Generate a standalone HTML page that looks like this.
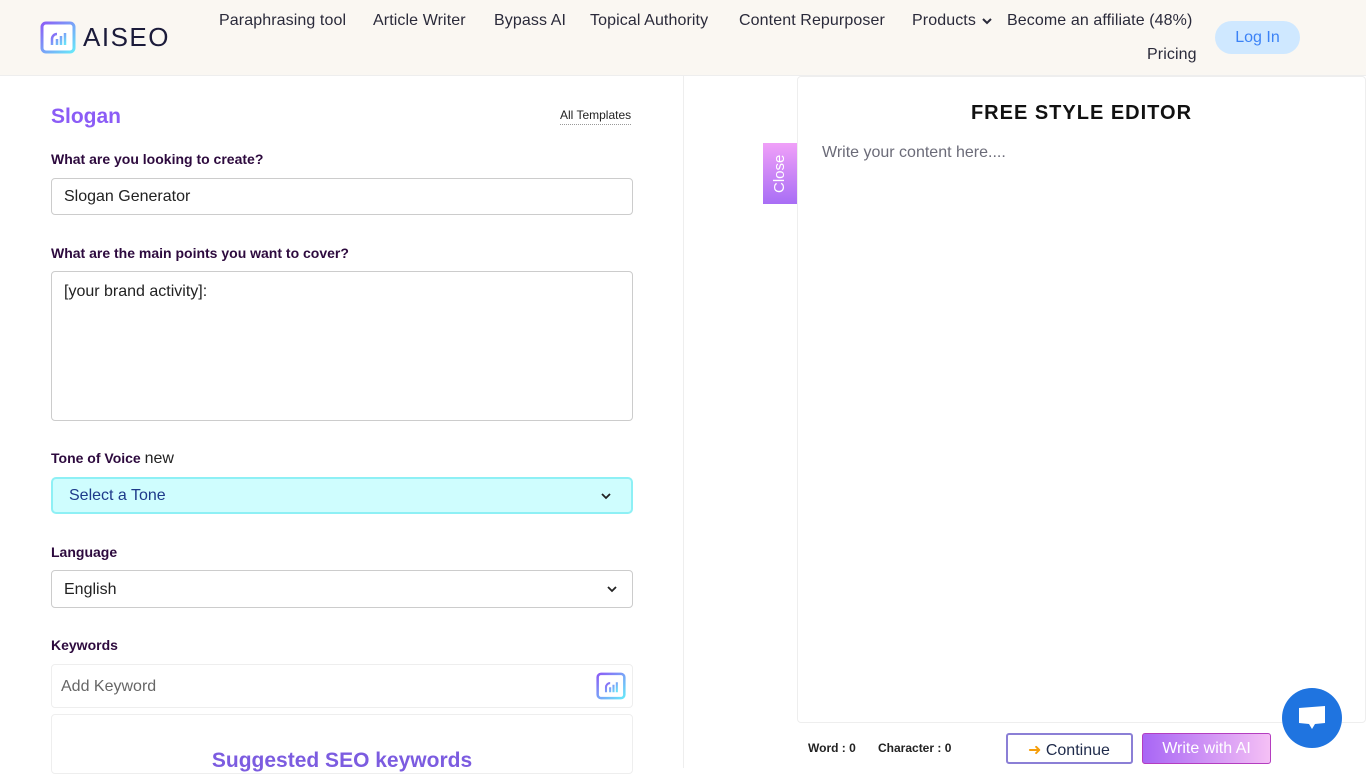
<!DOCTYPE html>
<html><head><meta charset="utf-8"><style>
*{box-sizing:border-box;margin:0;padding:0}
body{width:1366px;height:768px;overflow:hidden;background:#fff;font-family:"Liberation Sans",sans-serif;position:relative;color:#222}
.hdr{position:absolute;left:0;top:0;width:1366px;height:76px;background:#faf7f2;border-bottom:1px solid #eee}
.nav{position:absolute;font-size:16px;color:#2a2a3a;top:12px;letter-spacing:0.1px}
.abs{position:absolute}
.lbl{position:absolute;left:51px;font-size:14px;font-weight:bold;color:#2d0a3e}
.box{position:absolute;left:51px;width:582px;border:1px solid #ccc;border-radius:4px;background:#fff}
.chev{position:absolute}
</style></head><body>
<div class="hdr">
 <svg class="abs" style="left:40px;top:21px" width="36" height="33" viewBox="0 0 36 33"><defs><linearGradient id="g" x1="0" y1="0" x2="1" y2="1"><stop offset="0" stop-color="#8b5cf6"/><stop offset="1" stop-color="#67e8f9"/></linearGradient></defs><rect x="2" y="2" width="32" height="29" rx="4" fill="#fff" stroke="url(#g)" stroke-width="3"/><path d="M12 24v-6a5 5 0 0 1 5-5M17 24v-6M21 24v-9M25 24v-12" stroke="url(#g)" stroke-width="2.5" fill="none"/></svg>
 <div class="abs" style="left:83px;top:22px;font-size:26px;letter-spacing:1.5px;color:#1b1b3a">AISEO</div>
 <div class="nav" style="left:219px">Paraphrasing tool</div>
 <div class="nav" style="left:373px">Article Writer</div>
 <div class="nav" style="left:494px">Bypass AI</div>
 <div class="nav" style="left:590px">Topical Authority</div>
 <div class="nav" style="left:739px">Content Repurposer</div>
 <div class="nav" style="left:912px">Products</div>
 <svg class="chev" style="left:981px;top:16px" width="12" height="10" viewBox="0 0 12 10"><path d="M2 3l4 4 4-4" stroke="#2a2a3a" stroke-width="2" fill="none"/></svg>
 <div class="nav" style="left:1007px">Become an affiliate (48%)</div>
 <div class="nav" style="left:1147px;top:46px">Pricing</div>
 <div class="abs" style="left:1215px;top:21px;width:85px;height:33px;border-radius:17px;background:#cfe8ff;color:#3b82f6;font-size:16px;text-align:center;line-height:33px">Log In</div>
</div>
<div class="abs" style="left:0;top:76px;width:684px;height:692px;border-right:1px solid #eee"></div>
<div class="abs" style="left:51px;top:105px;font-size:21px;font-weight:bold;color:#8b5cf6">Slogan</div>
<div class="abs" style="left:560px;top:108px;font-size:12px;color:#222;border-bottom:1px dotted #999;padding-bottom:2px">All Templates</div>
<div class="lbl" style="top:151px">What are you looking to create?</div>
<div class="box" style="top:178px;height:37px;font-size:16px;padding:9px 12px">Slogan Generator</div>
<div class="lbl" style="top:245px">What are the main points you want to cover?</div>
<div class="box" style="top:271px;height:150px;font-size:16px;padding:11px 12px">[your brand activity]:</div>
<div class="lbl" style="top:450px">Tone of Voice <span style="font-weight:normal;font-size:16px;color:#222">new</span></div>
<div class="box" style="top:477px;height:37px;background:#cffdfe;border:2px solid #8ef0f5;border-radius:5px;font-size:16px;padding:8px 16px;color:#1e3a8a">Select a Tone<svg class="chev" style="right:19px;top:13px" width="12" height="8" viewBox="0 0 12 8"><path d="M2 2l4 4 4-4" stroke="#222" stroke-width="1.8" fill="none"/></svg></div>
<div class="lbl" style="top:544px">Language</div>
<div class="box" style="top:570px;height:38px;font-size:16px;padding:10px 12px">English<svg class="chev" style="right:14px;top:14px" width="12" height="8" viewBox="0 0 12 8"><path d="M2 2l4 4 4-4" stroke="#222" stroke-width="1.8" fill="none"/></svg></div>
<div class="lbl" style="top:637px">Keywords</div>
<div class="box" style="top:664px;height:44px;border-color:#eee;font-size:16px;padding:13px 9px;color:#666">Add Keyword
 <svg class="abs" style="right:6px;top:6px" width="30" height="30" viewBox="0 0 36 33"><rect x="2" y="2" width="32" height="29" rx="4" fill="#fff" stroke="url(#g)" stroke-width="3"/><path d="M12 24v-6a5 5 0 0 1 5-5M17 24v-6M21 24v-9M25 24v-12" stroke="url(#g)" stroke-width="2.5" fill="none"/></svg></div>
<div class="box" style="top:714px;height:60px;border-color:#eee"></div>
<div class="abs" style="left:51px;width:582px;top:749px;text-align:center;font-size:21px;font-weight:bold;color:#7c5ce0">Suggested SEO keywords</div>
<div class="abs" style="left:763px;top:143px;width:34px;height:61px;background:linear-gradient(#f0a0f8,#a86ef5)"></div>
<div class="abs" style="left:763px;top:143px;width:34px;height:61px;color:#fff;font-size:15px;writing-mode:vertical-rl;transform:rotate(180deg);text-align:center;line-height:34px">Close</div>
<div class="abs" style="left:797px;top:76px;width:569px;height:647px;border:1px solid #eee;border-radius:4px"></div>
<div class="abs" style="left:797px;width:569px;top:102px;text-align:center;font-size:20px;font-weight:bold;letter-spacing:1px;color:#111">FREE STYLE EDITOR</div>
<div class="abs" style="left:822px;top:144px;font-size:16px;color:#6b6b78">Write your content here....</div>
<div class="abs" style="left:808px;top:741px;font-size:12px;font-weight:bold;color:#222">Word : 0</div>
<div class="abs" style="left:878px;top:741px;font-size:12px;font-weight:bold;color:#222">Character : 0</div>
<div class="abs" style="left:1006px;top:733px;width:127px;height:31px;border:2px solid #8b7fd6;border-radius:3px;font-size:16px;color:#1e2a4a;padding:5px 0 0 20px"><span style="color:#f59e0b">&#10140;</span> Continue</div>
<div class="abs" style="left:1142px;top:733px;width:129px;height:31px;border:1px solid #b43ec0;border-radius:3px;background:linear-gradient(90deg,#a866f5,#f5c0f5);font-size:16px;color:#fff;text-align:center;line-height:29px">Write with AI</div>
<div class="abs" style="left:1282px;top:688px;width:60px;height:60px;border-radius:50%;background:#1f74e0"></div>
<svg class="abs" style="left:1297px;top:705px" width="30" height="28" viewBox="0 0 30 28"><path d="M2 3l26-2v17l-10 1-3 5-3-5-10 -1z" fill="#fff"/></svg>
</body></html>
